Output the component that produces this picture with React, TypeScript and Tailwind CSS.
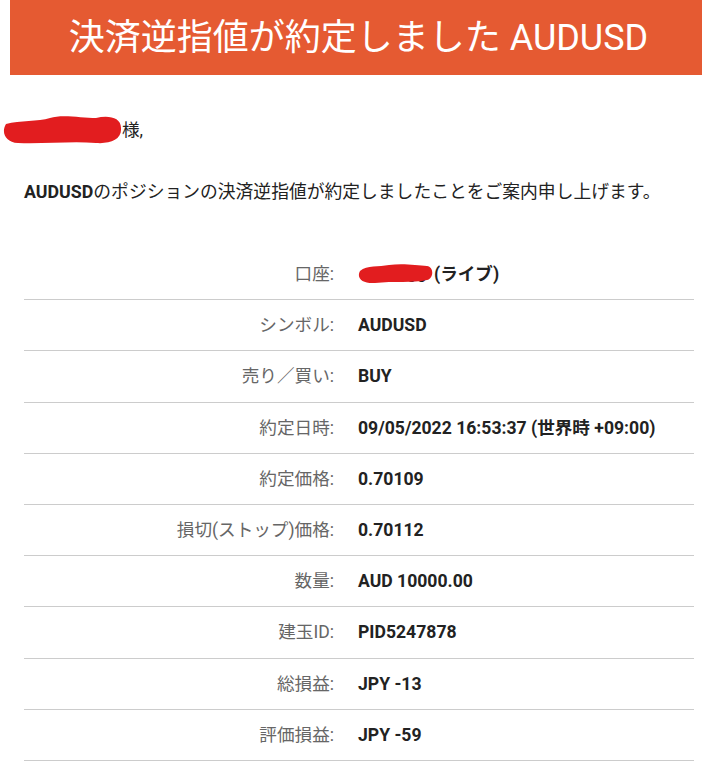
import React from "react";

const rows: { label: string; value: React.ReactNode }[] = [
  { label: "シンボル:", value: "AUDUSD" },
  { label: "売り／買い:", value: "BUY" },
  { label: "約定日時:", value: "09/05/2022 16:53:37 (世界時 +09:00)" },
  { label: "約定価格:", value: "0.70109" },
  { label: "損切(ストップ)価格:", value: "0.70112" },
  { label: "数量:", value: "AUD 10000.00" },
  { label: "建玉ID:", value: "PID5247878" },
  { label: "総損益:", value: "JPY -13" },
  { label: "評価損益:", value: "JPY -59" },
];

function Row({ label, value }: { label: string; value: React.ReactNode }) {
  return (
    <div className="grid grid-cols-[310px_1fr] gap-x-[24px] h-[51.2px] items-center border-b border-[#cccccc]">
      <div className="text-right text-[#666666] text-[17.6px] leading-6">{label}</div>
      <div className="text-[#222222] font-bold text-[17.6px] leading-6">{value}</div>
    </div>
  );
}

export default function App() {
  return (
    <div
      className="w-[702px] min-h-[767px] bg-white overflow-hidden"
      style={{ fontFamily: 'Roboto, "Noto Sans CJK JP", sans-serif' }}
    >
      <div className="ml-[10px] h-[75px] bg-[#e55a32] flex items-center justify-center text-white text-[36px] leading-none pl-[5px]">
        決済逆指値が約定しました AUDUSD
      </div>
      <div className="px-[24px] pr-[8px]">
        <div className="mt-[43px] flex items-center h-6 text-[17.6px] text-[#222222]">
          <svg className="-ml-[22px] shrink-0" width="121" height="30" viewBox="0 0 121 30">
            <path
              d="M4 9 C 18 5, 36 7, 48 3 C 60 -1, 80 3, 94 3 C 106 0, 119 2, 119 13 C 120 25, 108 29, 94 28 C 70 26, 42 29, 16 28 C 3 27, -1 17, 4 9 Z"
              fill="#e21d1f"
            />
          </svg>
          <span className="-ml-[1px]">様,</span>
        </div>
        <div className="mt-[38px] h-6 leading-6 text-[17.8px] text-[#222222] whitespace-nowrap">
          <span className="font-bold">AUDUSD</span>
          のポジションの決済逆指値が約定しましたことをご案内申し上げます。
        </div>
        <div className="mt-[45px]">
          <div className="grid grid-cols-[310px_1fr] gap-x-[24px] h-[51.2px] items-center border-b border-[#cccccc]">
            <div className="text-right text-[#666666] text-[17.6px] leading-6">口座:</div>
            <div className="flex items-center text-[#222222] font-bold text-[17.6px] leading-6">
              <span className="relative inline-block w-[74px] h-6 overflow-visible">
                <span className="absolute left-[8px] top-[2px] text-[#222222]">000000</span>
                <svg className="absolute -left-[1px] top-[1px]" width="76" height="22" viewBox="0 0 76 22">
                  <path
                    d="M3 8 C 10 2, 22 4, 32 2 C 44 0, 60 2, 70 3 C 77 4, 77 15, 70 17 C 56 20, 36 18, 18 20 C 6 21, -1 15, 3 8 Z"
                    fill="#e21d1f"
                  />
                </svg>
              </span>
              <span className="ml-[2px]">(ライブ)</span>
            </div>
          </div>
          {rows.map((r) => (
            <Row key={r.label} label={r.label} value={r.value} />
          ))}
        </div>
      </div>
    </div>
  );
}
